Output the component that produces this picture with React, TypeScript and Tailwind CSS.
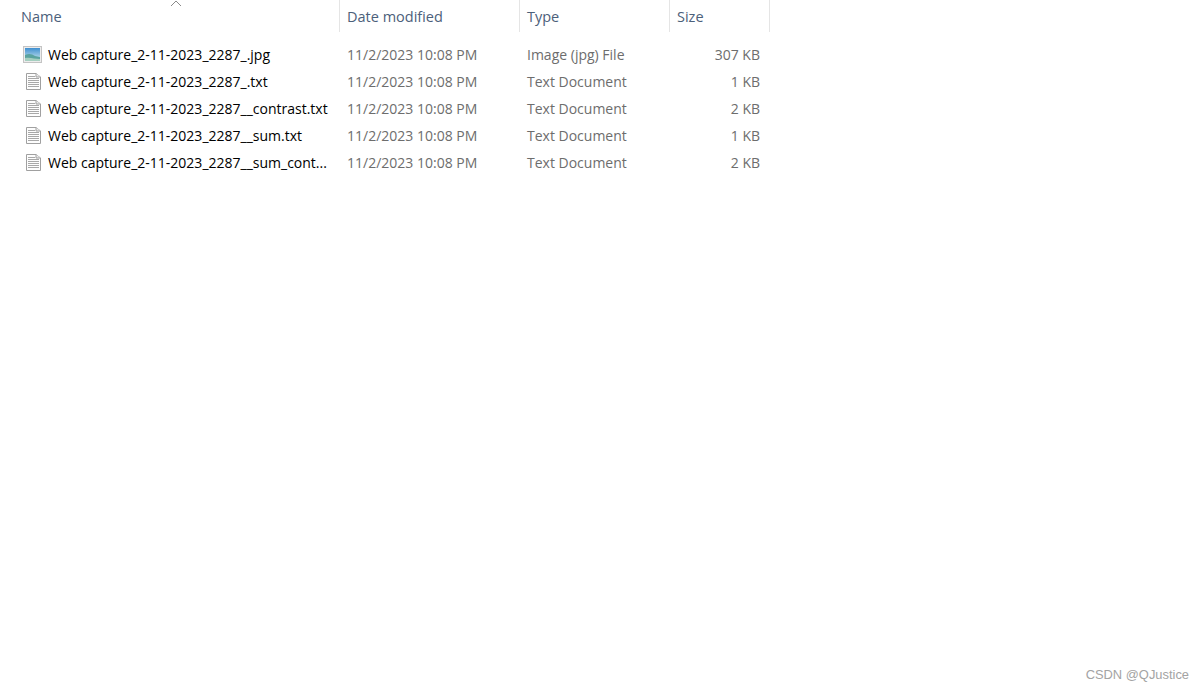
const files = [
  { name: "Web capture_2-11-2023_2287_.jpg", type: "Image (jpg) File", size: "307 KB", image: true },
  { name: "Web capture_2-11-2023_2287_.txt", type: "Text Document", size: "1 KB" },
  { name: "Web capture_2-11-2023_2287__contrast.txt", type: "Text Document", size: "2 KB" },
  { name: "Web capture_2-11-2023_2287__sum.txt", type: "Text Document", size: "1 KB" },
  { name: "Web capture_2-11-2023_2287__sum_cont...", type: "Text Document", size: "2 KB" },
];

const ImageIcon = () => (
  <svg width="20" height="18" viewBox="0 0 20 18" className="block">
    <defs>
      <linearGradient id="sky" x1="0" y1="0" x2="0" y2="1">
        <stop offset="0" stopColor="#3f8fd0" />
        <stop offset="1" stopColor="#d5eef2" />
      </linearGradient>
    </defs>
    <rect x="0.5" y="0.5" width="18" height="16" fill="#ececec" stroke="#c4c4c4" />
    <rect x="2" y="2" width="15" height="13" fill="url(#sky)" />
    <path d="M2 9 C6 7 9 8 12 10 L17 11 V15 H2 Z" fill="#5aa39f" />
    <path d="M2 12 C7 11 12 13 17 13 V15 H2 Z" fill="#a5cfc0" />
  </svg>
);

const TextIcon = () => (
  <svg width="20" height="18" viewBox="0 1 20 18" className="block">
    <path d="M3.5 1.5 H13 L17.5 5 V17.5 H3.5 Z" fill="#fdfdfd" stroke="#a0a0a0" />
    <path d="M13 1.5 V5 H17.5" fill="#ececec" stroke="#a0a0a0" />
    <path d="M5 4.5 H12 M5 6.5 H16 M5 8.5 H16 M5 10.5 H16 M5 12.5 H16 M5 14.5 H16" stroke="#a8a8a8" strokeWidth="1" />
  </svg>
);

const headers = [
  { label: "Name", cls: "w-[340px] pl-[21px]" },
  { label: "Date modified", cls: "w-[180px] pl-[7px]" },
  { label: "Type", cls: "w-[150px] pl-[7px]" },
  { label: "Size", cls: "w-[100px] pl-[7px]" },
];

export default function App() {
  return (
    <div className="relative h-[690px] w-[1203px] overflow-hidden bg-white font-['Open_Sans',sans-serif] text-[14px]">
      <div className="relative flex h-[32px] w-[770px]">
        {headers.map((h) => (
          <div key={h.label} className={`${h.cls} flex items-center border-r border-[#e5e5e5] pt-[1px] text-[14.5px] text-[#4c607a]`}>
            {h.label}
          </div>
        ))}
        <svg width="12" height="7" viewBox="0 0 12 7" className="absolute left-[170px] top-0">
          <path d="M1 6 L6 1 L11 6" fill="none" stroke="#8a8a8a" />
        </svg>
      </div>

      <div className="mt-[9px] flex w-[770px] flex-col">
        {files.map((f) => (
          <div key={f.name} className="flex h-[27px] items-center">
            <div className="flex w-[340px] items-center pl-[23px]">
              <div className="w-[25px]">{f.image ? <ImageIcon /> : <TextIcon />}</div>
              <span className="whitespace-nowrap text-black">{f.name}</span>
            </div>
            <div className="w-[180px] pl-[7px] text-[#6d6d6d]">11/2/2023 10:08 PM</div>
            <div className="w-[150px] pl-[7px] text-[#6d6d6d]">{f.type}</div>
            <div className="w-[100px] pr-[10px] text-right text-[#6d6d6d]">{f.size}</div>
          </div>
        ))}
      </div>

      <div className="absolute right-[14px] top-[665px] font-['Liberation_Sans',sans-serif] text-[12.9px] text-[#a3a3a3]">
        CSDN @QJustice
      </div>
    </div>
  );
}
